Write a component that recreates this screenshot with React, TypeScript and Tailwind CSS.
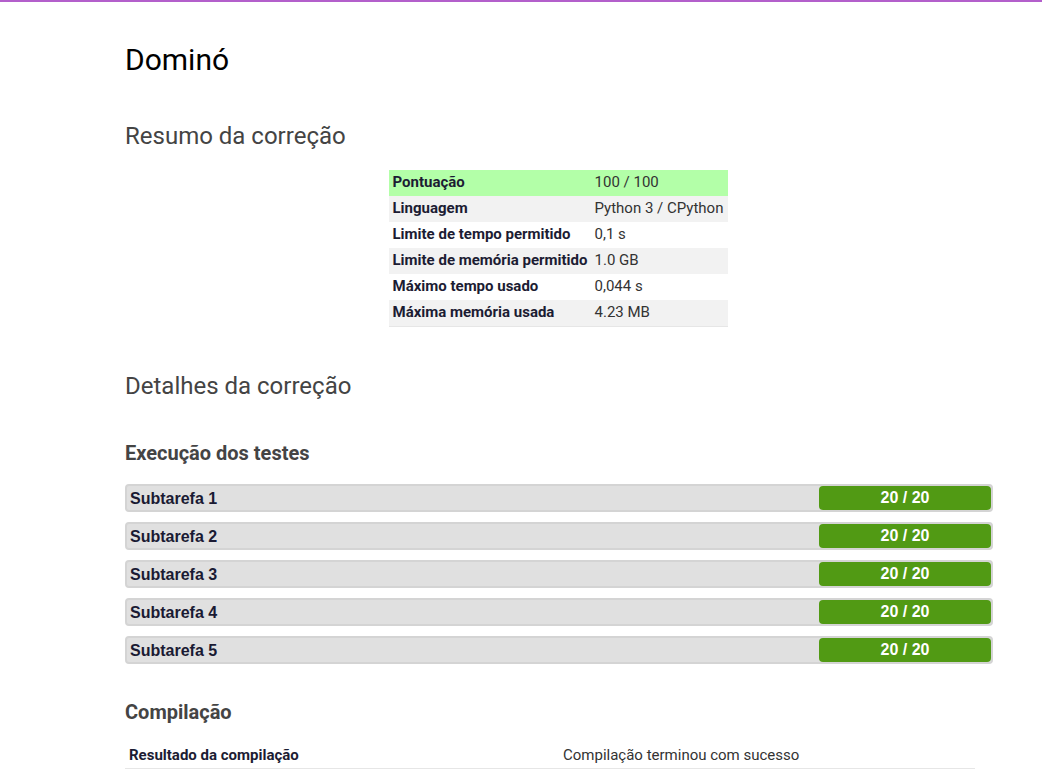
import React from 'react'

const summary: [string, string][] = [
  ['Pontuação', '100 / 100'],
  ['Linguagem', 'Python 3 / CPython'],
  ['Limite de tempo permitido', '0,1 s'],
  ['Limite de memória permitido', '1.0 GB'],
  ['Máximo tempo usado', '0,044 s'],
  ['Máxima memória usada', '4.23 MB'],
]

const subtasks = [1, 2, 3, 4, 5]

export default function App() {
  return (
    <div
      className="min-h-screen bg-white border-t-2 border-[#b35fcb] text-[#222]"
      style={{ fontFamily: 'Roboto, "Liberation Sans", sans-serif' }}
    >
      <div className="ml-[125px] w-[868px]">
        <h1 className="pt-[38px] text-[30px] leading-[40px] text-black">Dominó</h1>

        <h2 className="mt-[41px] text-[24px] leading-[30px] text-[#444]">Resumo da correção</h2>

        <div className="mt-[19px] flex justify-center pr-[2px]">
          <table className="w-[339px] border-b border-[#e6e6e6] text-[15px]">
            <tbody>
              {summary.map(([k, v], i) => (
                <tr
                  key={k}
                  className={
                    i === 0 ? 'bg-[#b3ffa8]' : i % 2 === 1 ? 'bg-[#f2f2f2]' : 'bg-white'
                  }
                >
                  <td className="h-[26px] pb-[2px] pl-1 pr-1 font-bold text-[#1c1c33] whitespace-nowrap">{k}</td>
                  <td className="h-[26px] pb-[2px] pl-[3px] pr-1 text-[#333] whitespace-nowrap">{v}</td>
                </tr>
              ))}
            </tbody>
          </table>
        </div>

        <h2 className="mt-[44px] text-[24px] leading-[30px] text-[#444]">Detalhes da correção</h2>

        <h3 className="mt-[39px] text-[20px] font-bold leading-[26px] text-[#444]">Execução dos testes</h3>

        <div
          className="mt-[18px] flex flex-col gap-[10px]"
          style={{ fontFamily: '"Liberation Sans", Arial, sans-serif' }}
        >
          {subtasks.map((n) => (
            <div
              key={n}
              className="flex h-[28px] items-center justify-between rounded-[4px] border-2 border-[#d4d4d4] bg-[#e0e0e0]"
            >
              <span className="pl-[3px] pt-[2px] text-[16px] font-bold text-[#1a1a33]">Subtarefa {n}</span>
              <span className="flex h-[24px] w-[172px] items-center justify-center rounded-[4px] bg-[#519a14] text-[16px] font-bold text-white">
                20 / 20
              </span>
            </div>
          ))}
        </div>

        <h3 className="mt-[35px] text-[20px] font-bold leading-[26px] text-[#444]">Compilação</h3>

        <table className="mt-[18px] w-[850px] border-b border-[#e6e6e6] text-[15px]">
          <tbody>
            <tr>
              <td className="h-[26px] w-[438px] pl-1 font-bold text-[#1c1c33]">Resultado da compilação</td>
              <td className="h-[26px] text-[#333]">Compilação terminou com sucesso</td>
            </tr>
          </tbody>
        </table>
      </div>
    </div>
  )
}
